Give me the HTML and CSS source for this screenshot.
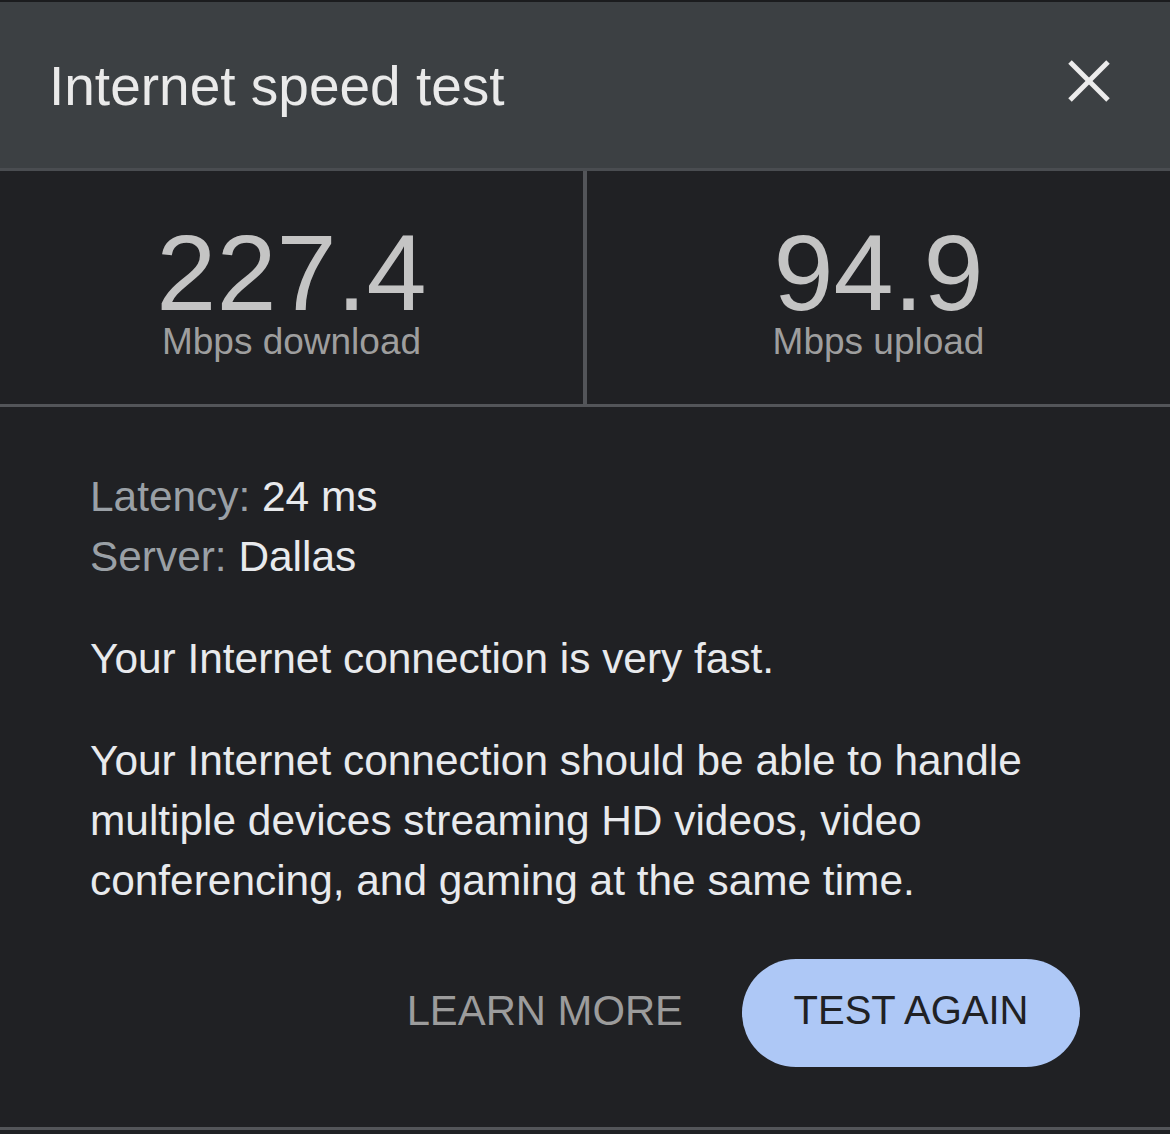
FILE: index.html
```html
<!DOCTYPE html>
<html lang="en">
<head>
    <meta charset="UTF-8">
    <title>Internet speed test</title>
    <link rel="stylesheet" href="styles.css">
</head>
<body>
    <div class="dialog">
        <!-- header -->
        <div class="head">
            <h1 class="title">Internet speed test</h1>
            <button class="close" aria-label="Close">
                <svg width="42" height="42" viewBox="0 0 42 42">
                    <line x1="2" y1="2" x2="40" y2="40"/>
                    <line x1="40" y1="2" x2="2" y2="40"/>
                </svg>
            </button>
        </div>
        <!-- results -->
        <div class="stats">
            <div class="stat">
                <span class="num">227.4</span>
                <span class="unit">Mbps download</span>
            </div>
            <div class="stat">
                <span class="num">94.9</span>
                <span class="unit">Mbps upload</span>
            </div>
        </div>
        <!-- details -->
        <div class="info">
            <div class="meta">
                <div><span class="key">Latency:</span> 24 ms</div>
                <div><span class="key">Server:</span> Dallas</div>
            </div>
            <p>Your Internet connection is very fast.</p>
            <p>Your Internet connection should be able to handle multiple devices streaming HD videos, video conferencing, and gaming at the same time.</p>
            <div class="actions">
                <button class="link">LEARN MORE</button>
                <button class="again">TEST AGAIN</button>
            </div>
        </div>
    </div>
</body>
</html>
```

FILE: styles.css
```css
*{margin:0;padding:0;box-sizing:border-box;}
html,body{background:#202124;}
body{font-family:"Liberation Sans", Arial, sans-serif;color:#e8eaed;}
button{font-family:inherit;border:none;background:none;cursor:pointer;}

.dialog{width:1170px;border-top:2px solid #1b1c1e;}

.head{
    height:169px;
    background:#3c4043;
    border-bottom:3px solid #4a4d51;
    display:flex;
    justify-content:space-between;
    padding:54px 0 0 49px;
}
.title{font-size:55px;font-weight:normal;line-height:60px;color:#eaeaea;}
.close{width:42px;height:42px;margin:4px 60px 0 0;}
.close svg{display:block;}
.close line{stroke:#ececec;stroke-width:5;}

.stats{
    display:grid;
    grid-template-columns:583px 1fr;
    height:236px;
    border-bottom:3px solid #535559;
}
.stat{
    display:flex;
    flex-direction:column;
    align-items:center;
    padding-top:56px;
}
.stat + .stat{border-left:4px solid #535559;}
.num{font-size:108px;line-height:92px;color:#c4c4c4;}
.unit{font-size:37px;line-height:40px;margin-top:3px;color:#9e9e9e;}

.info{
    padding:60px 90px 60px 90px;
    border-bottom:3px solid #535559;
    font-size:42.4px;
    line-height:60px;
}
.key{color:#9aa0a6;}
.meta{margin-bottom:42px;}
.info p{margin-bottom:42px;}
.info p:last-of-type{margin-bottom:48px;}

.actions{display:flex;justify-content:flex-end;align-items:center;gap:59px;}
.link{font-size:41.8px;color:#9c9c9c;line-height:60px;padding-bottom:5px;}
.again{
    width:338px;
    height:108px;
    border-radius:54px;
    background:#aec8f6;
    color:#202124;
    font-size:40px;
    padding-bottom:5px;
}
```
